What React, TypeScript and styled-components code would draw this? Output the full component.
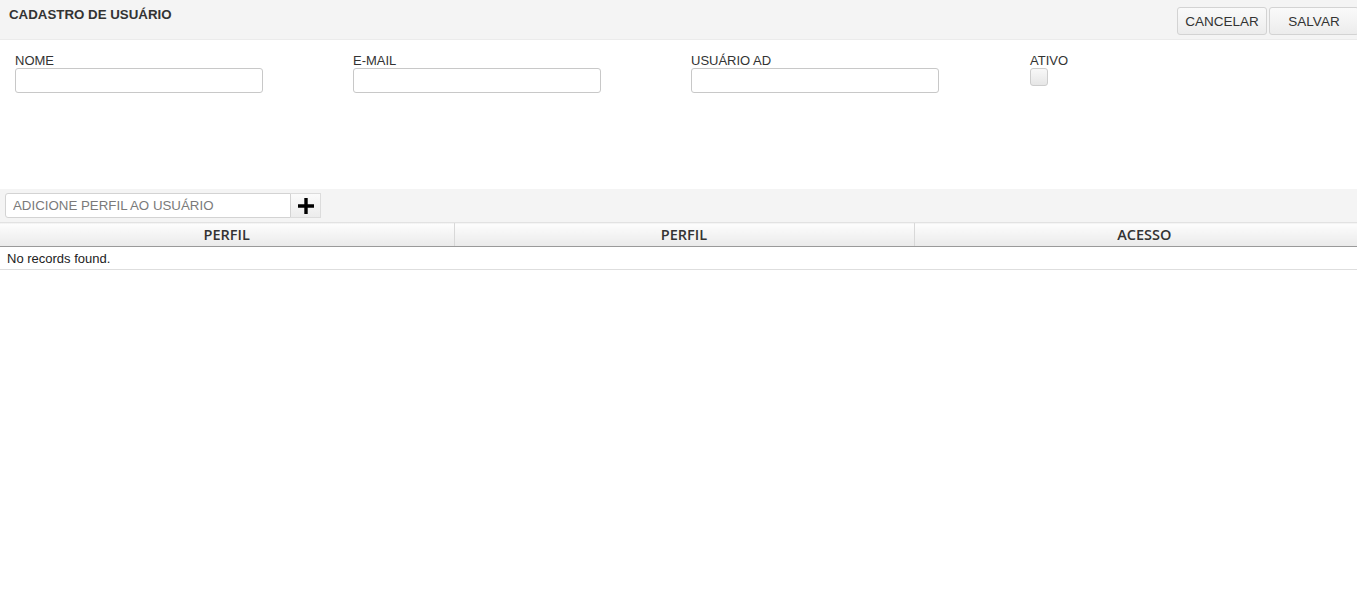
import React from "react";
import styled, { createGlobalStyle } from "styled-components";

const Global = createGlobalStyle`
  html, body { margin: 0; padding: 0; background: #fff; overflow-x: hidden; }
  body { font-family: "Liberation Sans", Arial, sans-serif; color: #333; }
  * { box-sizing: border-box; }
`;

const Page = styled.div`
  display: flex;
  flex-direction: column;
  width: 1357px;
  overflow: hidden;
`;

const TopBar = styled.div`
  height: 40px;
  background: #f4f4f4;
  border-bottom: 1px solid #ebebeb;
  display: flex;
  justify-content: space-between;
  align-items: flex-start;
`;

const Title = styled.h1`
  margin: 0;
  padding: 7px 0 0 9px;
  font-size: 13.3px;
  font-weight: bold;
  color: #333;
`;

const Actions = styled.div`
  display: flex;
  gap: 2px;
  padding-top: 7px;
  margin-right: -2px;
`;

const ActionButton = styled.button<{ $w: number }>`
  width: ${(p) => p.$w}px;
  height: 28px;
  border: 1px solid #d3d3d3;
  border-radius: 3px;
  background: linear-gradient(#fafafa, #ececec);
  font-family: "Liberation Sans", Arial, sans-serif;
  font-size: 13.5px;
  color: #333;
  padding: 0;
`;

const Form = styled.div`
  height: 149px;
  display: grid;
  grid-template-columns: 338px 338px 339px 338px;
  padding: 13px 0 0 15px;
  align-content: start;
`;

const Field = styled.div`
  display: flex;
  flex-direction: column;
`;

const Label = styled.label`
  font-size: 13px;
  line-height: 15px;
  color: #333;
`;

const TextInput = styled.input`
  width: 248px;
  height: 25px;
  border: 1px solid #c8c8c8;
  border-radius: 3px;
  background: #fff;
  font-size: 13px;
`;

const CheckBox = styled.span`
  display: block;
  width: 18px;
  height: 18px;
  border: 1px solid #cdcdcd;
  border-radius: 3px;
  background: linear-gradient(#f8f8f8, #e6e6e6);
`;

const AddBar = styled.div`
  height: 33px;
  background: #f4f4f4;
  display: flex;
  align-items: flex-start;
  padding: 4px 0 0 5px;
`;

const AddInput = styled.input`
  width: 286px;
  height: 25px;
  border: 1px solid #d3d3d3;
  border-radius: 3px 0 0 3px;
  padding: 0 7px;
  font-family: "Liberation Sans", Arial, sans-serif;
  font-size: 13.3px;
  color: #333;
  background: #fff;
  &::placeholder { color: #7a7a7a; }
`;

const PlusButton = styled.button`
  width: 30px;
  height: 25px;
  border: 1px solid #dcdcdc;
  border-left: none;
  background: linear-gradient(#fbfbfb, #ececec);
  display: flex;
  align-items: center;
  justify-content: center;
  padding: 0;
`;

const Table = styled.table`
  width: 1374px;
  border-collapse: collapse;
  table-layout: fixed;
`;

const Th = styled.th<{ $w: number }>`
  width: ${(p) => p.$w}px;
  height: 24px;
  padding: 0;
  font-family: "Open Sans", "Liberation Sans", sans-serif;
  font-size: 14.5px;
  font-weight: 600;
  line-height: 20px;
  color: #333;
  background: linear-gradient(#fdfdfd, #eaeaea);
  border-top: 1px solid #e2e2e2;
  border-bottom: 1px solid #9a9a9a;
  border-left: 1px solid #d8d8d8;
  &:first-child { border-left: none; }
`;

const Td = styled.td`
  height: 23px;
  padding: 0 7px;
  font-size: 13px;
  color: #222;
  border-bottom: 1px solid #dedede;
`;

export default function App() {
  return (
    <Page>
      <Global />
      <TopBar>
        <Title>CADASTRO DE USUÁRIO</Title>
        <Actions>
          <ActionButton $w={90}>CANCELAR</ActionButton>
          <ActionButton $w={90}>SALVAR</ActionButton>
        </Actions>
      </TopBar>
      <Form>
        <Field>
          <Label>NOME</Label>
          <TextInput />
        </Field>
        <Field>
          <Label>E-MAIL</Label>
          <TextInput />
        </Field>
        <Field>
          <Label>USUÁRIO AD</Label>
          <TextInput />
        </Field>
        <Field>
          <Label>ATIVO</Label>
          <CheckBox />
        </Field>
      </Form>
      <AddBar>
        <AddInput placeholder="ADICIONE PERFIL AO USUÁRIO" />
        <PlusButton>
          <svg width="16" height="16" viewBox="0 0 16 16">
            <path d="M6.3 0h3.4v6.3H16v3.4H9.7V16H6.3V9.7H0V6.3h6.3z" fill="#000" />
          </svg>
        </PlusButton>
      </AddBar>
      <Table>
        <thead>
          <tr>
            <Th $w={454}>PERFIL</Th>
            <Th $w={460}>PERFIL</Th>
            <Th $w={460}>ACESSO</Th>
          </tr>
        </thead>
        <tbody>
          <tr>
            <Td colSpan={3}>No records found.</Td>
          </tr>
        </tbody>
      </Table>
    </Page>
  );
}
